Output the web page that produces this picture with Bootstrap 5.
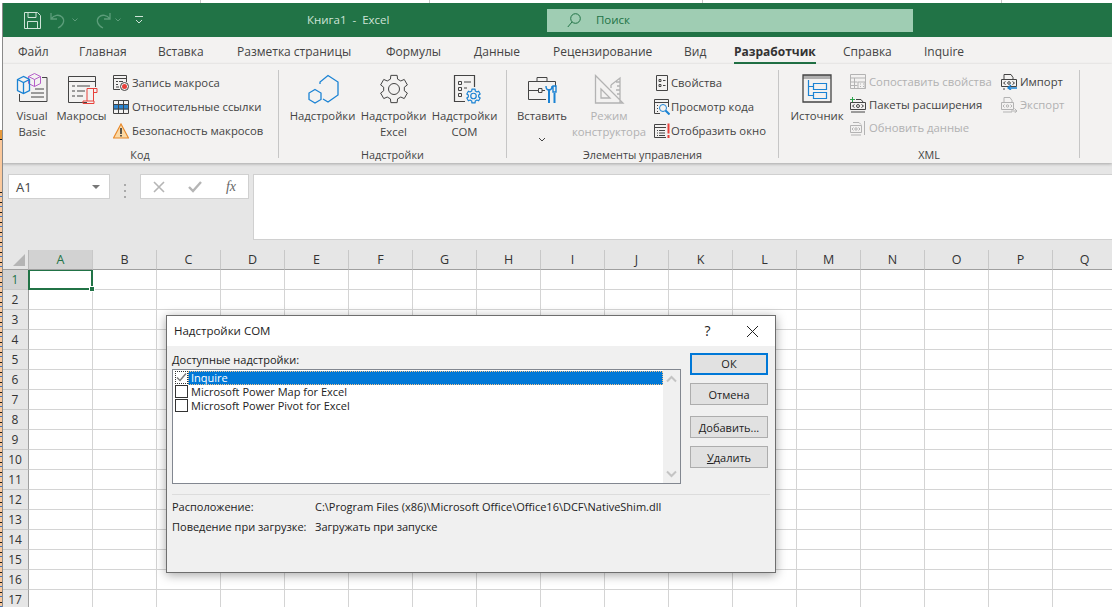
<!DOCTYPE html>
<html lang="ru">
<head>
<meta charset="utf-8">
<title>Книга1 - Excel</title>
<link href="https://cdn.jsdelivr.net/npm/bootstrap@5.3.0/dist/css/bootstrap.min.css" rel="stylesheet">
<style>
html,body{height:100%;overflow:hidden}
body{font-family:"Open Sans","Noto Sans",sans-serif;font-size:11.3px;line-height:16px;color:#444;
 background:repeating-linear-gradient(#fbc99c 0 5px,#1a1a1a 5px 6px,#fbc99c 6px 9px,#3a78c8 9px 10px) 0 187px/2px 100% no-repeat,
 linear-gradient(#fff 130px,#e89a3c 130px,#e89a3c 139px,#111 139px,#111 140px,#fbc99c 140px) 0 0/2px 100% no-repeat,
 linear-gradient(to right,transparent 200px,#c8c8c8 200px,#c8c8c8 201px,transparent 201px,transparent 429px,#c8c8c8 429px,#c8c8c8 430px,transparent 430px,transparent 702px,#c8c8c8 702px,#c8c8c8 703px,transparent 703px,transparent 1001px,#c8c8c8 1001px,#c8c8c8 1002px,transparent 1002px) 0 0/100% 3px no-repeat,#fff}
.xl{margin:3px 0 0 2px;height:604px;position:relative}
.xl::after{content:"";position:absolute;left:0;top:0;bottom:0;width:1px;background:#8a8a8a;z-index:3}
.titlebar{height:34px;background:#217346;color:#d9e9df}
.qat{width:305px;padding-left:22px}
.qat .chev{margin:0 14px 0 3px}
.doc-title{width:240px;font-size:11.5px;color:#cfe3d7}
.search{width:366px;height:23px;background:#9fcdb3;color:#217346;padding-left:20px;gap:15px;font-size:11.5px}
.tabs{display:grid;grid-template-columns:61px 79px 79px 149px 88px 79px 131px 50px 109px 81px auto;padding-left:16px;height:27px;background:#f3f2f1;font-size:12px;align-items:end}
.tabs span{display:block;height:25px;line-height:26px;width:max-content}
.tabs .active{font-weight:700;color:#333;border-bottom:2px solid #217346;width:82px}
.ribbon{height:99px;background:#f3f2f1;padding-top:6px;box-shadow:0 1px 3px rgba(0,0,0,.28);position:relative;z-index:2}
.grp{height:88px;border-right:1px solid #c6c6c6;flex:none}
.g1{width:277px;padding-left:6px}
.g2{width:228px;padding-left:8px}
.g3{width:272px;padding-left:2px}
.g3 .sm{gap:1px}
.g4{width:301px;padding-left:7px}
.gbody{height:77px;padding-top:1px}
.glabel{height:16px;margin-bottom:-5px;text-align:center;flex:none;font-size:10.8px}
.lab1{margin-left:-6px}.lab2{margin-left:-8px}.lab3{margin-left:-2px}.lab4{margin-left:-7px}
.big{display:flex;flex-direction:column;align-items:center;text-align:center;flex:none;padding-top:2px;white-space:nowrap}
.big svg{height:32px;width:32px;margin-bottom:3px;flex:none}
.w48{width:48px}.w51{width:51px}.w71{width:71px}.w66{width:66px}.w68{width:68px}.w62{width:62px}
.smcol{flex:none}
.tight .smcol{margin-top:-1px}
.ml6{margin-left:6px}.ml11{margin-left:11px}.ml2{margin-left:2px}
.w151{width:151px}
.sm{display:flex;align-items:center;gap:3px;height:24px;white-space:nowrap}
.tight .sm{height:23px}
.sm svg{width:16px;height:16px;flex:none}
.off{color:#b1b1b1}
svg{display:block;fill:none}
.d{stroke:#444}.b{stroke:#1b83d4}.r{stroke:#e8403a}.p{stroke:#b55fc9}.g{stroke:#b3b3b3}
.fbar{height:87px;background:#e6e6e6;padding:11px 0 0 6px;gap:0}
.namebox{width:102px;height:25px;background:#fff;border:1px solid #d0d0d0;padding:0 9px 0 7px;font-size:13px;color:#444}
.caret{width:0;height:0;border-left:4px solid transparent;border-right:4px solid transparent;border-top:4px solid #777}
.dots{width:30px;flex:none}
.dots i{display:block;width:2px;height:2px;background:#aaa;margin:2px 0}
.fxbox{width:109px;height:25px;background:#fff;border:1px solid #d0d0d0;flex:none;padding:0 12px 0 12px;color:#777}
.fxbox b{font:italic 400 14px "Liberation Serif",serif;color:#666}
.fxinput{margin-left:4px;height:66px;flex:1;background:#fff;border:1px solid #d0d0d0;border-right:0}
.chead{height:20px;background:#e6e6e6}
.corner{width:27px;flex:none;border-bottom:1px solid #9f9f9f;border-right:1px solid #b8b8b8;position:relative}
.corner::after{content:"";position:absolute;right:3px;bottom:3px;border-style:solid;border-width:0 0 12px 12px;border-color:transparent transparent #b5b5b5 transparent}
.chead span{width:64px;flex:none;text-align:center;line-height:19px;font-size:12.5px;color:#333;border-bottom:1px solid #9f9f9f;border-right:1px solid #c8c8c8}
.chead .sel,.rhead .sel{background:#d2d2d2;color:#217346}
.grid-row{min-height:0}
.rhead{width:27px;flex:none;background:#e6e6e6}
.rhead span{display:block;height:20px;line-height:20px;text-align:center;font-size:12px;color:#333;border-bottom:1px solid #c8c8c8;border-right:1px solid #9f9f9f}
.sheet{flex:1;position:relative;background:linear-gradient(to right,transparent 63px,#d4d4d4 63px) 0 0/64px 20px,linear-gradient(to bottom,transparent 19px,#d4d4d4 19px) 0 0/64px 20px,#fff}
.cursor{left:-1px;top:-1px;width:65px;height:21px;border:2px solid #217346}
.cursor::after{content:"";position:absolute;right:-4px;bottom:-4px;width:6px;height:6px;background:#217346;border:1px solid #fff}
.dlg{left:166px;top:315px;width:610px;height:258px;background:#f0f0f0;border:1px solid #6e6e6e;box-shadow:0 2px 10px rgba(0,0,0,.35);z-index:5;color:#222}
.dtitle{height:30px;background:#fff;padding-left:7px;font-size:11.5px}
.dtitle .q{margin-left:auto;width:45px;text-align:center;font-size:14px}
.dtitle svg{width:13px;height:13px;margin:0 16px 0 16px}
.dbody{padding:7px 7px 0 5px;gap:9px}
.dleft{width:509px;flex:none}
.dleft label{height:16px;display:block;line-height:14px;font-size:11px}
.dlist{height:115px;border:1px solid #828790;background:#fff;padding:1px 0 0 2px;position:relative}
.ditem{height:14px;line-height:14px;font-size:11px;gap:3px;width:488px}
.ck{width:13px;height:13px;border:1px solid #333;flex:none;background:#fff}
.ck svg{width:11px;height:11px;stroke:#777}
.ditem.on .ck{border:1px dotted #333}
.ditem.on em{background:#0078d7;color:#fff;font-style:normal;flex:1;outline:1px dotted #f5c48a;outline-offset:-1px;padding-left:3px;margin-left:-3px}
.ditem em{font-style:normal}
.vs{right:0;top:0;bottom:0;width:17px;background:#f0f0f0;padding:5px 0}
.vs svg{width:11px;height:8px;stroke:#c4c4c4;stroke-width:2}
.dbtns{width:78px;flex:none}
.dlg .btn{height:22px;width:78px;padding:0;border-radius:0;font-size:11px;line-height:19px;background:#e1e1e1;border:1px solid #adadad;color:#222;display:block}
.dlg .btn.def{border:2px solid #0078d7;line-height:18px;margin-bottom:8px}
.mb11{margin-bottom:11px}.mb8{margin-bottom:8px}
.dsep{margin:10px 5px 2px 5px;height:1px;background:#dcdcdc}
.dinfo{padding-left:5px;font-size:11px;line-height:20px}
.dinfo dt{font-weight:400;width:143px;flex:none;margin:0}
.dinfo dd{margin:0}
</style>
</head>
<body>
<div class="xl d-flex flex-column overflow-hidden">
  <header class="titlebar d-flex align-items-center flex-shrink-0">
    <div class="qat d-flex align-items-center">
      <svg width="17" height="17" viewBox="0 0 17 17" stroke="#cfe3d7"><path d="M.5.5h13l3 3v13H.5z"/><path d="M4 .5v5h8v-5M3.500 16.500v-7h10v7"/></svg>
      <svg class="ms-2" width="20" height="17" viewBox="0 0 20 17" stroke="#5c9d7a" stroke-width="1.3"><path d="M2 1v6h6M2 7c3-4 8-5 11-2 3 3 2 8-4 11"/></svg>
      <svg class="chev" width="6" height="4" viewBox="0 0 6 4" stroke="#5c9d7a"><path d="M.5.5 3 3 5.500.5"/></svg>
      <svg width="20" height="17" viewBox="0 0 20 17" stroke="#5c9d7a" stroke-width="1.3"><path d="M18 1v6h-6M18 7C15 3 10 2 7 5c-3 3-2 8 4 11"/></svg>
      <svg class="chev" width="6" height="4" viewBox="0 0 6 4" stroke="#5c9d7a"><path d="M.5.5 3 3 5.500.5"/></svg>
      <svg width="8" height="8" viewBox="0 0 8 8" stroke="#cfe3d7"><path d="M0 .5h8M1 4l3 3 3-3"/></svg>
    </div>
    <div class="doc-title">Книга1&nbsp; - &nbsp;Excel</div>
    <div class="search d-flex align-items-center">
      <svg width="14" height="15" viewBox="0 0 14 15" stroke="#217346"><circle cx="8.500" cy="5.500" r="4.800"/><path d="M5 9 .8 14"/></svg>
      <span>Поиск</span>
    </div>
  </header>

  <nav class="tabs flex-shrink-0">
    <span>Файл</span><span>Главная</span><span>Вставка</span><span>Разметка страницы</span><span>Формулы</span><span>Данные</span><span>Рецензирование</span><span>Вид</span><span class="active">Разработчик</span><span>Справка</span><span>Inquire</span>
  </nav>

  <section class="ribbon d-flex flex-shrink-0">
    <div class="grp g1 d-flex flex-column">
      <div class="gbody d-flex">
        <div class="big w48">
          <svg viewBox="0 0 32 32"><path class="d" d="M26 4.500h5v24H3.500V21M15 20h13M15 24h13M19 16h9"/><path class="p" d="M12.500 3.500 18.500.5l6 3v7l-6 3-6-3zM12.500 3.500l6 3 6-3M18.500 6.500v7"/><path class="b" stroke-width="1.300" d="M1.500 6.500 7.500 3.500l6 3v11l-6 3-6-3zM1.500 6.500l6 3 6-3M7.500 9.500v11"/></svg>
          <span>Visual<br>Basic</span>
        </div>
        <div class="big w51">
          <svg viewBox="0 0 32 32"><path class="d" d="M21 29.500H2.500v-26h27V14M2.500 8.500h27M6 13h3M11 13h13M6 18h3M11 18h8M6 23h3M11 23h6"/><path class="r" d="M21 15.500h10v4h-3M21 15.500V28h-4v2.500h11V28h-7M27.500 15.500v12.500"/></svg>
          <span>Макросы</span>
        </div>
        <div class="smcol ml6">
          <div class="sm"><svg viewBox="0 0 16 16"><path class="d" d="M7 14.500H.5V.5h13V7M.5 3.500h13M3 6.500h2M6 6.500h4M3 9.500h2M3 12h3"/><circle class="d" cx="11.500" cy="11.500" r="4"/><circle cx="11.500" cy="11.500" r="2.500" fill="#e8403a"/></svg><span>Запись макроса</span></div>
          <div class="sm"><svg viewBox="0 0 16 16"><path fill="#2e86d0" d="M1 5.500h14v5H1z"/><path class="d" d="M.5 1.500h15v13H.5zM.5 5.500h15M.5 10h15M5.500 1.500v13M10.500 1.500v13"/></svg><span>Относительные ссылки</span></div>
          <div class="sm"><svg viewBox="0 0 16 16"><path d="M8 1 15.500 15H.5z" fill="#fbd9a5" stroke="#e8892b" stroke-width="1.200"/><path stroke="#333" stroke-width="1.600" d="M8 5v6M8 12v1.600"/></svg><span>Безопасность макросов</span></div>
        </div>
      </div>
      <div class="glabel lab1">Код</div>
    </div>

    <div class="grp g2 d-flex flex-column">
      <div class="gbody d-flex">
        <div class="big w71">
          <svg viewBox="0 0 32 32"><path class="b" stroke-width="1.300" d="M13 11V9L21 2.500 31 9v13L21 29l-5-3"/><path class="b" stroke-width="1.300" d="M8 16.500l6 3.500v6.500L8 30l-6-3.500V20z"/></svg>
          <span>Надстройки</span>
        </div>
        <div class="big w71">
          <svg viewBox="0 0 32 32"><path class="d" stroke-linejoin="round" d="M12.410 6.130 12.850 2.360H19.150L19.590 6.130 22.750 7.960 26.240 6.450 29.390 11.910 26.340 14.180V17.820L29.390 20.090 26.240 25.550 22.750 24.040 19.590 25.870 19.150 29.640H12.850L12.410 25.870 9.250 24.040 5.760 25.550 2.610 20.090 5.660 17.820V14.180L2.610 11.910 5.760 6.450 9.250 7.960z"/><circle class="d" cx="16" cy="16" r="5.500"/></svg>
          <span>Надстройки<br>Excel</span>
        </div>
        <div class="big w71">
          <svg viewBox="0 0 32 32"><path class="d" stroke-width="1.200" d="M16 28.500H5.500V2.500h20V14"/><path class="d" d="M9.500 8.500h3v3h-3zM9.500 14.500h3v3h-3zM9.500 20.500h3v3h-3zM15 9h7M15 15h3"/><g transform="translate(16.500 15) scale(.5)"><path class="b" stroke-width="2.400" stroke-linejoin="round" d="M12.410 6.130 12.850 2.360H19.150L19.590 6.130 22.750 7.960 26.240 6.450 29.390 11.910 26.340 14.180V17.820L29.390 20.090 26.240 25.550 22.750 24.040 19.590 25.870 19.150 29.640H12.850L12.410 25.870 9.250 24.040 5.760 25.550 2.610 20.090 5.660 17.820V14.180L2.610 11.910 5.760 6.450 9.250 7.960z"/><circle class="b" stroke-width="2.400" cx="16" cy="16" r="5.500"/></g></svg>
          <span>Надстройки<br>COM</span>
        </div>
      </div>
      <div class="glabel lab2">Надстройки</div>
    </div>

    <div class="grp g3 d-flex flex-column">
      <div class="gbody d-flex">
        <div class="big w66">
          <svg viewBox="0 0 32 32"><path class="d" d="M20 26.500H2.500v-18h27V14M11 8.500v-4h10v4M2.500 17.500h10M16 17.500h3"/><path class="d" d="M12.500 15.500h3.500v4h-3.500z"/><path stroke="#1b83d4" stroke-width="2" d="M23 16v14M28.500 20v10"/><path class="b" stroke-width="1.400" d="M20 13c0 3 1 4 3 4s3-1 3-4M27 13h3v6h-3z"/></svg>
          <span>Вставить</span>
          <svg class="chevron" viewBox="0 0 32 8"><path class="d" d="M13 2l3 3 3-3"/></svg>
        </div>
        <div class="big w68 off">
          <svg viewBox="0 0 32 32"><path class="g" stroke-width="1.300" d="M2.500 2.500 30 30H2.500zM8 16l9 9H8zM18 12 27 5v25M27 9h-4M27 13h-3M27 17h-4M27 21h-3M18 12v3"/></svg>
          <span>Режим<br>конструктора</span>
        </div>
        <div class="smcol ml11">
          <div class="sm"><svg viewBox="0 0 16 16"><path class="d" d="M2.500.5h11v15h-11zM5 4.500h2v2H5zM5 9.500h2v2H5zM9 5.500h2.500M9 10.500h2.500"/></svg><span>Свойства</span></div>
          <div class="sm"><svg viewBox="0 0 16 16"><path class="d" d="M6 14.500H.5V.5h14V8M.5 3.500h14M3 6.500h1M3 9.500h1M3 12.500h1"/><circle class="b" cx="9" cy="9" r="3.500"/><path stroke="#1b83d4" stroke-width="2" d="M11.500 11.500 15.500 15.500"/></svg><span>Просмотр кода</span></div>
          <div class="sm"><svg viewBox="0 0 16 16"><path class="d" d="M12 14.500H.5V1.500H12M.5 4.500H12M3 7.500h1M5 7.500h6M3 10h1M5 10h6M3 12.500h1M5 12.500h6"/><path stroke="#e8403a" stroke-width="2" d="M14.500 .5v10M14.500 12v3"/></svg><span>Отобразить окно</span></div>
        </div>
      </div>
      <div class="glabel lab3">Элементы управления</div>
    </div>

    <div class="grp g4 d-flex flex-column">
      <div class="gbody d-flex tight">
        <div class="big w62">
          <svg viewBox="0 0 32 32"><path d="M2 2h28v4H2z" fill="#b0b0b0"/><path class="d" stroke-width="1.300" d="M2 2h28v27H2z"/><path class="b" stroke-width="1.200" d="M12.500 10.500h13v6h-13zM12.500 19.500h13v6h-13zM7.500 7v15.500h5M7.500 13.500h5"/></svg>
          <span>Источник</span>
        </div>
        <div class="smcol ml2 w151">
          <div class="sm off"><svg viewBox="0 0 16 16"><path class="g" d="M.5.500h15v14H.5zM.5 4h15M.5 8h7M.5 11.500h7M4.500 4v10M8 8h7v6.500H8zM10 10h1M13 10h1M10 12.500h1M13 12.500h1"/></svg><span>Сопоставить свойства</span></div>
          <div class="sm"><svg viewBox="0 0 16 16"><path class="d" d="M.5 5.500h15v7H.5zM1 15h14M6 2.500h5l2 2.500"/><path class="d" d="M4.500 7.500l-2 1.500 2 1.500M11.500 7.500l2 1.500-2 1.500"/><circle class="d" cx="8" cy="9" r="1.500"/><path stroke="#2aa34a" d="M0 2.500h5M2.500 0v5"/></svg><span>Пакеты расширения</span></div>
          <div class="sm off"><svg viewBox="0 0 16 16"><path class="g" d="M.5 5.500h11v7H.5zM1 15h10M3 2.500h6l2 2M14.500 1v14M3.500 7.500l-1.500 1.500 1.500 1.500M8.500 7.500l1.500 1.500-1.500 1.500"/><circle class="g" cx="6" cy="9" r="1.200"/></svg><span>Обновить данные</span></div>
        </div>
        <div class="smcol">
          <div class="sm"><svg viewBox="0 0 16 16"><path class="d" d="M.5 5.500h15v7H.5zM2 15h2M3 5V.5h7l2 3v2M4.500 7.500l-2 1.500 2 1.500M11.500 7.500l2 1.500-2 1.500"/><circle class="d" cx="8" cy="9" r="1.300"/><path stroke="#1b83d4" stroke-width="1.300" d="M16 14H7M10 11l-3 3 3 2"/></svg><span>Импорт</span></div>
          <div class="sm off"><svg viewBox="0 0 16 16"><path class="g" d="M.5 5.500h12v7H.5zM2 15h9M3 5V.5h6l2 3v2M3.500 7.500l-1.500 1.500 1.500 1.500M9.500 7.500l1.500 1.500-1.500 1.500M10 14h6M13.500 11.500 16 14l-2.500 2"/><circle class="g" cx="6.500" cy="9" r="1.200"/></svg><span>Экспорт</span></div>
        </div>
      </div>
      <div class="glabel lab4">XML</div>
    </div>
  </section>

  <div class="fbar d-flex align-items-start flex-shrink-0">
    <div class="namebox d-flex align-items-center justify-content-between flex-shrink-0"><span>A1</span><i class="caret"></i></div>
    <div class="dots d-flex flex-column align-items-center pt-2"><i></i><i></i><i></i></div>
    <div class="fxbox d-flex align-items-center justify-content-between">
      <svg width="12" height="12" viewBox="0 0 12 12" stroke="#b5b5b5" stroke-width="1.600"><path d="M1 1l10 10M11 1 1 11"/></svg>
      <svg width="14" height="12" viewBox="0 0 14 12" stroke="#b5b5b5" stroke-width="2.400"><path d="M1 6l4 4 8-9"/></svg>
      <b>fx</b>
    </div>
    <div class="fxinput"></div>
  </div>

  <div class="chead d-flex flex-shrink-0">
    <div class="corner"></div>
    <span class="sel">A</span><span>B</span><span>C</span><span>D</span><span>E</span><span>F</span><span>G</span><span>H</span><span>I</span><span>J</span><span>K</span><span>L</span><span>M</span><span>N</span><span>O</span><span>P</span><span>Q</span>
  </div>
  <div class="grid-row d-flex flex-grow-1 overflow-hidden">
    <div class="rhead">
      <span class="sel">1</span><span>2</span><span>3</span><span>4</span><span>5</span><span>6</span><span>7</span><span>8</span><span>9</span><span>10</span><span>11</span><span>12</span><span>13</span><span>14</span><span>15</span><span>16</span><span>17</span>
    </div>
    <div class="sheet"><div class="cursor position-absolute"></div></div>
  </div>
</div>

<div class="dlg position-absolute d-flex flex-column" role="dialog">
  <div class="dtitle d-flex align-items-center">
    <span>Надстройки COM</span>
    <span class="q">?</span>
    <svg viewBox="0 0 13 13" stroke="#222"><path d="M1 1l11 11M12 1 1 12"/></svg>
  </div>
  <div class="dbody d-flex">
    <div class="dleft">
      <label><u>Д</u>оступные надстройки:</label>
      <div class="dlist">
        <div class="ditem on d-flex"><span class="ck d-flex align-items-center justify-content-center"><svg viewBox="0 0 11 11"><path d="M1 5.500l3 3 6-7" stroke-width="1.400"/></svg></span><em>Inquire</em></div>
        <div class="ditem d-flex"><span class="ck"></span><em>Microsoft Power Map for Excel</em></div>
        <div class="ditem d-flex"><span class="ck"></span><em>Microsoft Power Pivot for Excel</em></div>
        <div class="vs position-absolute d-flex flex-column justify-content-between align-items-center">
          <svg viewBox="0 0 11 8"><path d="M1 6.500 5.500 2 10 6.500"/></svg>
          <svg viewBox="0 0 11 8"><path d="M1 1.500 5.500 6 10 1.500"/></svg>
        </div>
      </div>
    </div>
    <div class="dbtns">
      <button class="btn def" type="button">ОК</button>
      <button class="btn mb11" type="button">Отмена</button>
      <button class="btn mb8" type="button"><u>Д</u>обавить...</button>
      <button class="btn" type="button"><u>У</u>далить</button>
    </div>
  </div>
  <div class="dsep"></div>
  <dl class="dinfo mb-0">
    <div class="d-flex"><dt>Расположение:</dt><dd>C:\Program Files (x86)\Microsoft Office\Office16\DCF\NativeShim.dll</dd></div>
    <div class="d-flex"><dt>Поведение при загрузке:</dt><dd>Загружать при запуске</dd></div>
  </dl>
</div>
<script src="https://cdn.jsdelivr.net/npm/bootstrap@5.3.0/dist/js/bootstrap.bundle.min.js"></script>
</body>
</html>
